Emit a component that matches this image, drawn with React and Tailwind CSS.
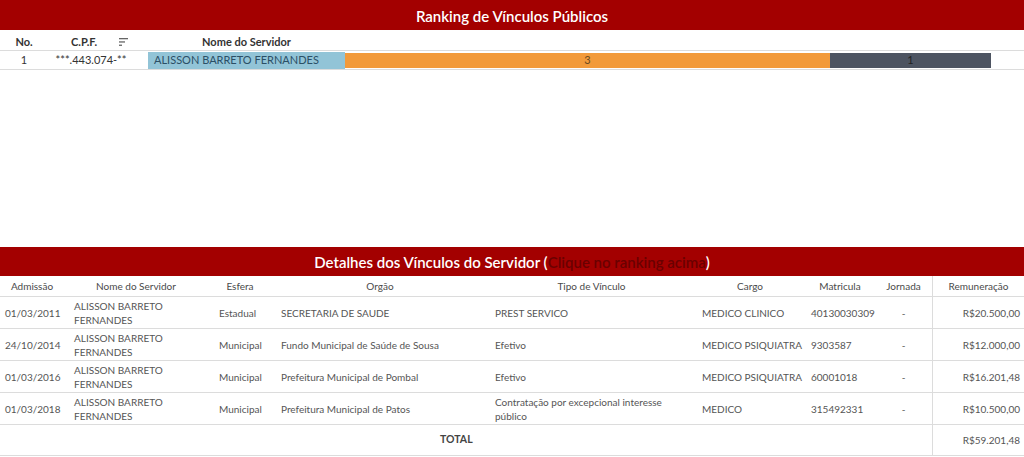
import React from 'react'

const rows = [
    { data: '01/03/2011', esfera: 'Estadual', orgao: 'SECRETARIA DE SAUDE', tipo: 'PREST SERVICO', cargo: 'MEDICO CLINICO', matricula: '40130030309', valor: 'R$20.500,00' },
    { data: '24/10/2014', esfera: 'Municipal', orgao: 'Fundo Municipal de Saúde de Sousa', tipo: 'Efetivo', cargo: 'MEDICO PSIQUIATRA', matricula: '9303587', valor: 'R$12.000,00' },
    { data: '01/03/2016', esfera: 'Municipal', orgao: 'Prefeitura Municipal de Pombal', tipo: 'Efetivo', cargo: 'MEDICO PSIQUIATRA', matricula: '60001018', valor: 'R$16.201,48' },
    { data: '01/03/2018', esfera: 'Municipal', orgao: 'Prefeitura Municipal de Patos', tipo: 'Contratação por excepcional interesse público', cargo: 'MEDICO', matricula: '315492331', valor: 'R$10.500,00' },
]

const cols = "grid grid-cols-[64px_144px_64px_216px_207px_110px_70px_57px_92px]"

function SortIcon() {
    return (
        <svg width="9" height="8" viewBox="0 0 9 8" className="ml-[22px]">
            <rect x="0" y="0" width="9" height="1.3" fill="#666" />
            <rect x="0" y="3.3" width="6" height="1.3" fill="#666" />
            <rect x="0" y="6.6" width="3" height="1.3" fill="#666" />
        </svg>
    )
}

export default function App() {
    return (
        <div className="w-[1024px] h-[457px] bg-white overflow-hidden font-['Lato','Open_Sans',sans-serif]">
            {/* ranking */}
            <div className="h-[247px]">
                <div className="h-[30px] pt-[2px] bg-[#a30000] flex items-center justify-center text-white text-[15px] font-semibold">
                    Ranking de Vínculos Públicos
                </div>
                <div className="flex items-end h-[21px] pb-0 border-b border-[#dcdcdc] text-[11px] font-bold text-[#333]">
                    <div className="w-[48px] text-center">No.</div>
                    <div className="w-[100px] flex items-center pl-[23px]">
                        <span>C.P.F.</span>
                        <SortIcon />
                    </div>
                    <div className="w-[197px] text-center">Nome do Servidor</div>
                </div>
                <div className="flex items-center h-[19px] border-b border-[#dcdcdc] text-[11px] text-[#333]">
                    <div className="w-[48px] text-center">1</div>
                    <div className="w-[86px] text-center">***.443.074-**</div>
                    <div className="w-[14px]" />
                    <div className="w-[197px] h-[17px] bg-[#92c4d7] text-[#2b4f66] pl-[6px] flex items-center">ALISSON BARRETO FERNANDES</div>
                    <div className="w-[485px] h-[15px] bg-[#f29a3a] text-[#6b4a20] flex items-center justify-center">3</div>
                    <div className="w-[161px] h-[15px] bg-[#4d5461] text-[#222] flex items-center justify-center">1</div>
                </div>
            </div>

            {/* detalhes */}
            <div className="h-[29px] pt-[2px] bg-[#a30000] flex items-center justify-center text-white text-[15px] font-semibold">
                Detalhes dos Vínculos do Servidor (<span className="text-[#6a0000]">Clique no ranking acima</span>)
            </div>
            <div className={`${cols} h-[21px] items-center border-b border-[#dcdcdc] text-[10px] text-[#4a4a4a]`}>
                <div className="text-center">Admissão</div>
                <div className="text-center">Nome do Servidor</div>
                <div className="text-center">Esfera</div>
                <div className="text-center">Orgão</div>
                <div className="text-center">Tipo de Vínculo</div>
                <div className="text-center">Cargo</div>
                <div className="text-center">Matricula</div>
                <div className="text-center">Jornada</div>
                <div className="h-full flex items-center justify-center border-l border-[#dcdcdc]">Remuneração</div>
            </div>
            {rows.map((r) => (
                <div key={r.data} className={`${cols} h-[32px] items-center border-b border-[#dcdcdc] text-[10px] leading-[14px] text-[#555]`}>
                    <div className="pl-[5px]">{r.data}</div>
                    <div className="pl-[10px]">ALISSON BARRETO<br />FERNANDES</div>
                    <div className="pl-[11px]">{r.esfera}</div>
                    <div className="pl-[9px]">{r.orgao}</div>
                    <div className="pl-[7px] pr-[20px]">{r.tipo}</div>
                    <div className="pl-[7px]">{r.cargo}</div>
                    <div className="pl-[6px]">{r.matricula}</div>
                    <div className="text-center">-</div>
                    <div className="h-full flex items-center justify-end pr-[4px] border-l border-[#dcdcdc]">{r.valor}</div>
                </div>
            ))}
            <div className={`${cols} h-[31px] items-center border-b border-[#dcdcdc] text-[10px] text-[#555]`}>
                <div className="col-span-8 pl-[440px] text-[10.5px] font-bold text-[#444]">TOTAL</div>
                <div className="h-full flex items-center justify-end pr-[4px] border-l border-[#dcdcdc]">R$59.201,48</div>
            </div>
        </div>
    )
}
